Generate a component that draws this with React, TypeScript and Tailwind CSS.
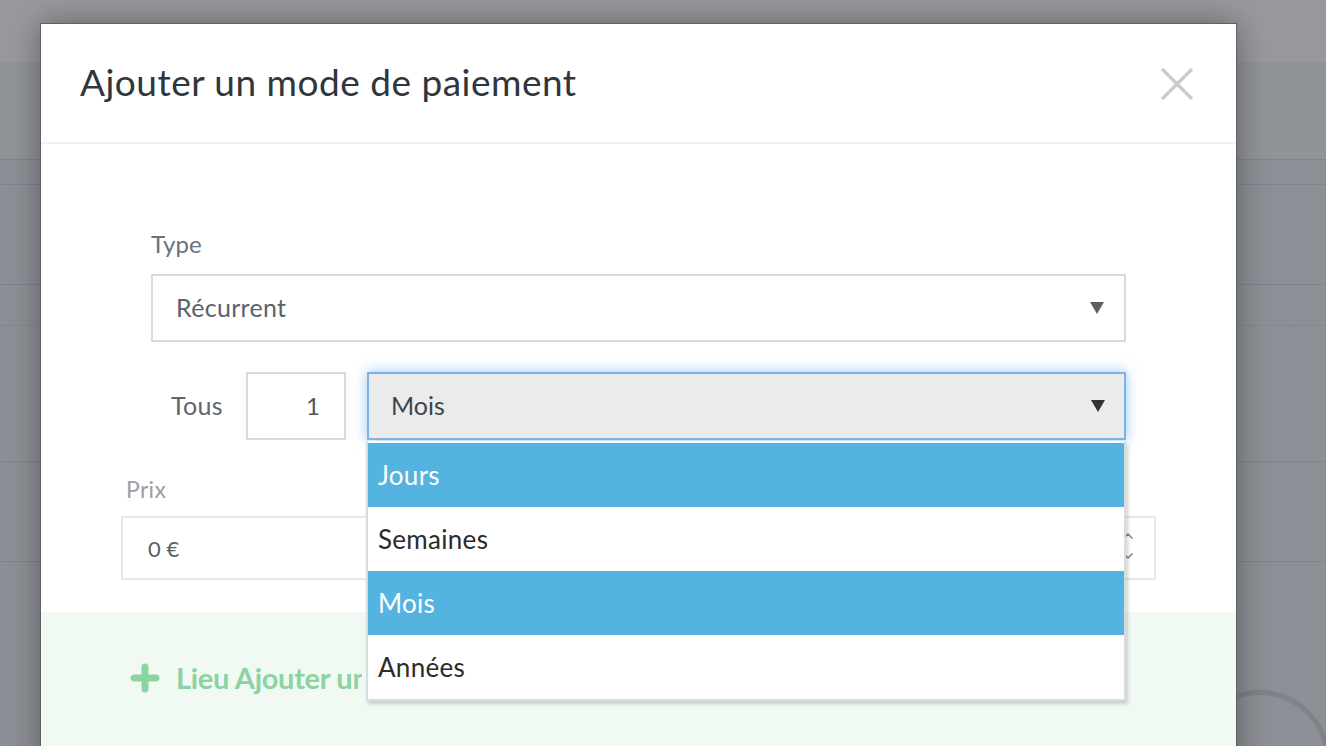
import { ChevronDown, ChevronUp } from "lucide-react"

const options = ["Jours", "Semaines", "Mois", "Années"]

function Caret({ className }: { className: string }) {
    return (
        <svg width="14" height="12" viewBox="0 0 14 12" className={className}>
            <path d="M0 0 H14 L7 12 Z" fill="currentColor" />
        </svg>
    )
}

export default function App() {
    return (
        <div
            className="relative w-[1326px] h-[746px] overflow-hidden bg-[#8c8f95]"
            style={{ fontFamily: "Lato, 'Noto Sans', sans-serif" }}
        >
            {/* Page behind the overlay */}
            <div className="flex flex-col">
                <div className="h-[62px] bg-[#97999d]" />
                <div className="h-[98px] bg-[#909397] border-b border-[#80838a]" />
                <div className="h-[25px] border-b border-[#80838a]" />
                <div className="h-[100px] border-b border-[#80838a]" />
                <div className="h-[41px] border-b border-dashed border-[#80838a]" />
                <div className="h-[136px] border-b border-[#80838a]" />
                <div className="h-[100px] border-b border-[#80838a]" />
            </div>
            <div className="absolute left-[1190px] top-[690px] w-[140px] h-[140px] rounded-full border-[5px] border-[#7f8288]" />

            {/* Modal */}
            <div className="absolute left-[40px] top-[23px] w-[1197px] h-[760px] bg-white border border-[#5f6164] shadow-[0_0_30px_rgba(0,0,0,0.35)] flex flex-col">
                <div className="h-[120px] shrink-0 flex items-center justify-between pl-[39px] pr-[42px] border-b-2 border-[#f2f2f2]">
                    <h1 className="text-[37px] text-[#2f363d] tracking-[0.5px] -mt-[2px]">Ajouter un mode de paiement</h1>
                    <svg width="34" height="34" viewBox="0 0 34 34" className="text-[#cccccc] mt-[1px]">
                        <path d="M2 2 L32 32 M32 2 L2 32" stroke="currentColor" strokeWidth="3.5" />
                    </svg>
                </div>

                <div className="flex flex-col pt-[88px]">
                    <div className="flex flex-col px-[110px]">
                        <label className="text-[24px] text-[#69717a] leading-none">Type</label>
                        <div className="mt-[18px] h-[68px] border-2 border-[#d4dcdf] flex items-center justify-between pl-[23px] pr-[20px]">
                            <span className="text-[25px] text-[#5a626b] tracking-[0.3px]">Récurrent</span>
                            <Caret className="text-[#5f5f5f]" />
                        </div>

                        <div className="mt-[30px] flex items-center">
                            <span className="w-[95px] pl-[20px] text-[25px] text-[#5e666e] tracking-[0.3px]">Tous</span>
                            <div className="w-[100px] h-[68px] border-2 border-[#d4dcdf] flex items-center justify-end pr-[24px] text-[24px] text-[#4f555b]">
                                1
                            </div>
                            <div className="ml-[21px] flex-1 h-[68px] bg-[#ebebeb] border-2 border-[#7fb2e6] shadow-[0_0_12px_rgba(102,175,233,0.7)] flex items-center justify-between pl-[22px] pr-[19px]">
                                <span className="text-[25px] text-[#3e444a]">Mois</span>
                                <Caret className="text-[#333333]" />
                            </div>
                        </div>
                    </div>

                    <div className="flex flex-col px-[80px] mt-[38px]">
                        <label className="pl-[5px] text-[23px] text-[#9a9ea2] leading-none tracking-[0.3px]">Prix</label>
                        <div className="relative mt-[15px] h-[64px] border-2 border-[#e8e8e8] flex items-center pl-[25px]">
                            <span className="text-[22px] text-[#5a6066]">0 €</span>
                            <div className="absolute right-[18px] top-[10px] flex flex-col text-[#888] gap-[4px]">
                                <ChevronUp size={16} strokeWidth={2.5} />
                                <ChevronDown size={16} strokeWidth={2.5} />
                            </div>
                        </div>
                    </div>

                    <div className="mt-[32px] h-[200px] bg-[#f0faf3] flex items-start pt-[44px] pl-[89px]">
                        <div className="flex items-center gap-[16px] text-[#8bd3a0]">
                            <svg width="30" height="30" viewBox="0 0 30 30">
                                <path d="M15 4 V26 M4 15 H26" stroke="currentColor" strokeWidth="7" strokeLinecap="round" />
                            </svg>
                            <span className="w-[186px] overflow-hidden whitespace-nowrap text-[29px] font-bold tracking-[-0.3px]">Lieu Ajouter un lieu</span>
                        </div>
                    </div>
                </div>
            </div>

            {/* Open select list */}
            <div className="absolute left-[366px] top-[441px] w-[760px] bg-white border-2 border-[#d6dde0] border-t-0 pt-[2px] shadow-[2px_3px_4px_rgba(0,0,0,0.18)] flex flex-col">
                {options.map((o, i) => (
                    <div
                        key={o}
                        className={
                            (i === 0 || i === 2 ? "bg-[#55b3e0] text-white" : "bg-white text-[#2b2b2b]") +
                            " h-[64px] flex items-center pl-[10px] text-[26px] tracking-[0.3px]"
                        }
                    >
                        {o}
                    </div>
                ))}
            </div>
        </div>
    )
}
